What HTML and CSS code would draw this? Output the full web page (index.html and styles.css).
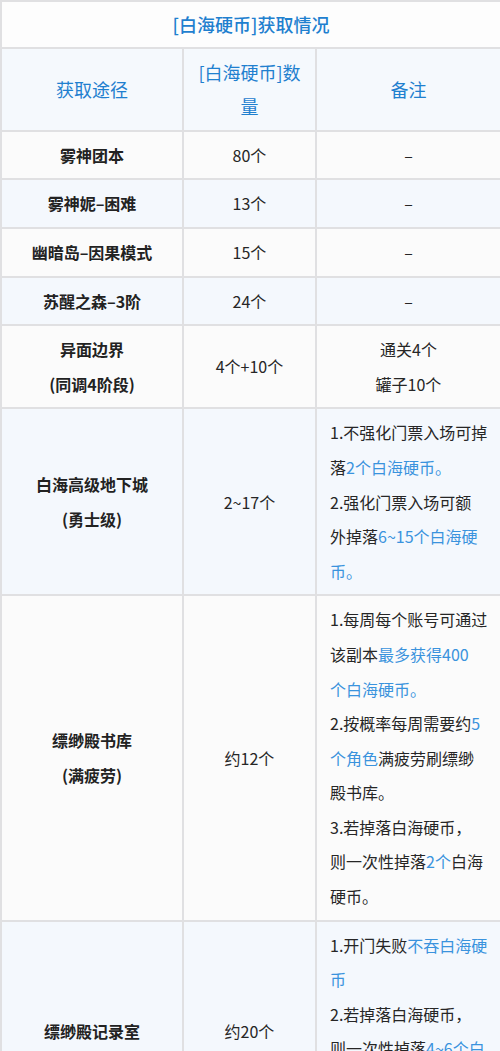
FILE: index.html
```html
<!DOCTYPE html>
<html lang="zh-CN">
<head>
<meta charset="utf-8">
<title>[白海硬币]获取情况</title>
<link rel="stylesheet" href="styles.css">
</head>
<body>
<table class="coin-table">
  <colgroup>
    <col class="c1">
    <col class="c2">
    <col class="c3">
  </colgroup>
  <thead>
    <tr class="title-row"><th colspan="3">[白海硬币]获取情况</th></tr>
    <tr class="head-row">
      <th>获取途径</th>
      <th>[白海硬币]数<br>量</th>
      <th>备注</th>
    </tr>
  </thead>
  <tbody>
    <tr class="odd"><td class="name">雾神团本</td><td class="num">80个</td><td class="note center">–</td></tr>
    <tr class="even"><td class="name">雾神妮–困难</td><td class="num">13个</td><td class="note center">–</td></tr>
    <tr class="odd"><td class="name">幽暗岛–因果模式</td><td class="num">15个</td><td class="note center">–</td></tr>
    <tr class="even"><td class="name">苏醒之森–3阶</td><td class="num">24个</td><td class="note center">–</td></tr>
    <tr class="odd"><td class="name">异面边界<br>(同调4阶段)</td><td class="num">4个+10个</td><td class="note center">通关4个<br>罐子10个</td></tr>
    <tr class="even"><td class="name">白海高级地下城<br>(勇士级)</td><td class="num">2~17个</td><td class="note">1.不强化门票入场可掉<br>落<span class="hl">2个白海硬币。</span><br>2.强化门票入场可额<br>外掉落<span class="hl">6~15个白海硬<br>币。</span></td></tr>
    <tr class="odd"><td class="name">缥缈殿书库<br>(满疲劳)</td><td class="num">约12个</td><td class="note">1.每周每个账号可通过<br>该副本<span class="hl">最多获得400<br>个白海硬币。</span><br>2.按概率每周需要约<span class="hl">5<br>个角色</span>满疲劳刷缥缈<br>殿书库。<br>3.若掉落白海硬币，<br>则一次性掉落<span class="hl">2个</span>白海<br>硬币。</td></tr>
    <tr class="even"><td class="name">缥缈殿记录室</td><td class="num">约20个</td><td class="note">1.开门失败<span class="hl">不吞白海硬<br>币</span><br>2.若掉落白海硬币，<br>则一次性掉落<span class="hl">4~6个白<br>海硬币。</span><br>3.每周可多次挑战。</td></tr>
  </tbody>
</table>
</body>
</html>
```
FILE: styles.css
```css
html, body {
  margin: 0;
  padding: 0;
  background: #ffffff;
}
body {
  font-family: "Noto Sans CJK SC", "Noto Sans", sans-serif;
  color: #262626;
}
.coin-table {
  width: 500px;
  border-collapse: collapse;
  table-layout: fixed;
}
.c1 { width: 182px; }
.c2 { width: 133px; }
.c3 { width: 185px; }
.coin-table th,
.coin-table td {
  border: 2px solid #e0e0e2;
  padding: 6px 13px;
  line-height: 34.6px;
  text-align: center;
  vertical-align: middle;
  white-space: nowrap;
}
.title-row th {
  background: #fdfdfd;
  color: #1f80cf;
  font-size: 18px;
  font-weight: 500;
  padding-top: 5px;
  padding-bottom: 5px;
}
.head-row th {
  background: #f5f9fd;
  color: #1f80cf;
  font-size: 18px;
  font-weight: 400;
}
.odd td { background: #fbfbfb; }
.even td { background: #f4f8fd; }
.coin-table td {
  font-size: 16px;
}
.name {
  font-weight: 700;
  color: #222;
}
.num {
  font-weight: 400;
}
.note {
  text-align: left !important;
}
.note.center {
  text-align: center !important;
}
.hl {
  color: #3a93dd;
}
```
